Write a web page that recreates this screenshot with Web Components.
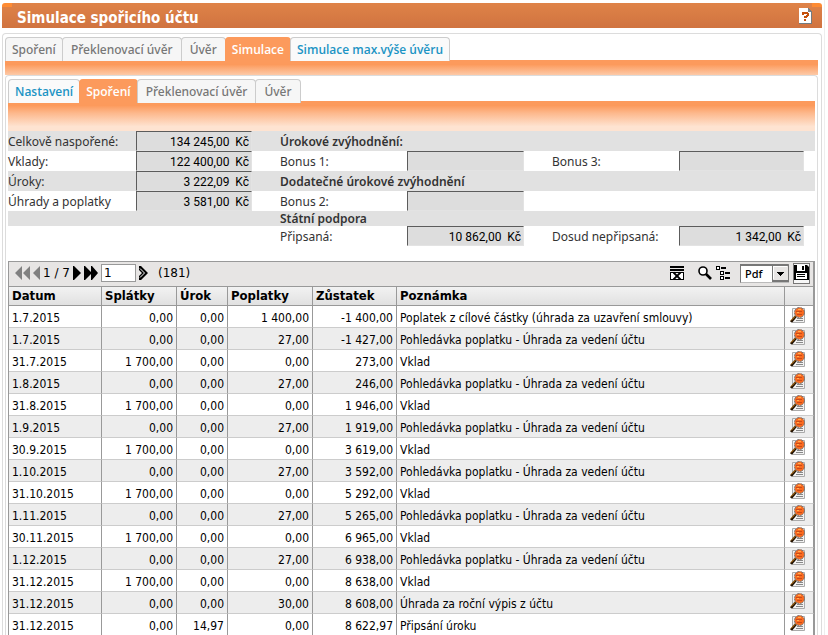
<!DOCTYPE html>
<html lang="cs">
<head>
<meta charset="utf-8">
<title>Simulace spořicího účtu</title>
<style>
html { scrollbar-width: none; background: #fff; }
body { margin: 0; font: 12px/16px "Open Sans", "Noto Sans", sans-serif; color: #333; }
</style>
</head>
<body>
<app-window>
  <title-bar>Simulace spořicího účtu</title-bar>
  <tab-panel>
    <tab-item slot="tabs">Spoření</tab-item>
    <tab-item slot="tabs">Překlenovací úvěr</tab-item>
    <tab-item slot="tabs">Úvěr</tab-item>
    <tab-item slot="tabs" active>Simulace</tab-item>
    <tab-item slot="tabs" linked>Simulace max.výše úvěru</tab-item>
    <tab-panel inner>
      <tab-item slot="tabs" linked>Nastavení</tab-item>
      <tab-item slot="tabs" active>Spoření</tab-item>
      <tab-item slot="tabs">Překlenovací úvěr</tab-item>
      <tab-item slot="tabs">Úvěr</tab-item>
      <savings-summary></savings-summary>
      <grid-toolbar></grid-toolbar>
      <transaction-grid></transaction-grid>
    </tab-panel>
  </tab-panel>
</app-window>
<script>
function define(name, html, setup) {
  const template = document.createElement('template');
  template.innerHTML = html;
  customElements.define(name, class extends HTMLElement {
    constructor() {
      super();
      const root = this.attachShadow({ mode: 'open' });
      root.append(template.content.cloneNode(true));
      if (setup) setup(root);
    }
  });
}

define('app-window', `
<style>
:host { display: block; box-sizing: border-box; min-height: 100vh; margin-right: 3px; padding: 3px 2px 0 2px; border-right: 1px solid #eee; }
</style>
<slot></slot>`);

define('title-bar', `
<style>
:host { display: flex; justify-content: space-between; align-items: center; box-sizing: border-box; height: 25px; padding: 0 10px 0 15px;
  border-radius: 3px 3px 0 0; background:
  linear-gradient(#fe8b33, #fe8b33) left top / 10px 4px no-repeat,
  linear-gradient(#fe8b33, #fe8b33) right top / 10px 4px no-repeat,
  linear-gradient(#df8348, #d07340); }
h1 { margin: 0; padding-top: 4px; font: bold 15px/20px "DejaVu Sans Condensed", "DejaVu Sans", sans-serif; color: #fff; }
button { border: 0; padding: 0; background: none; display: block; }
svg { display: block; }
</style>
<h1><slot></slot></h1>
<button type="button" aria-label="Nápověda"><svg width="13" height="16" viewBox="0 0 13 16" shape-rendering="crispEdges">
<path d="M0 0h9l4 4v12H0z" fill="#747b80"/><path d="M0 0h9v4h3v11H0z" fill="#fff"/><path d="M9 1v3h3z" fill="#7d8386"/>
<path d="M3 4h6v1h1v3H9v1H8v1H5V8h2V7h1V6H5v1H3zM5 11h2v2H5z" fill="#c5500c"/></svg></button>`);

define('tab-panel', `
<style>
:host { display: block; box-sizing: border-box; margin-top: 5px; padding: 3px 3px 0 2px; border: 1px solid #dcdcdc; border-bottom: 0; border-radius: 4px 4px 0 0; background: #fff; }
nav { display: flex; height: 23px; }
.strip { height: 15px; background: linear-gradient(#fc9a5c 30%, #fdcaa8); }
:host([inner]) { margin-top: 0; padding: 3px 2px 0 2px; }
:host([inner]) nav { height: 22px; }
:host([inner]) .strip { height: 30px; background: linear-gradient(#fc9a5c 15%, #fdb88c 40%, #fee3d1 85%, #fee3d1); }
</style>
<nav><slot name="tabs"></slot></nav>
<div class="strip"></div>
<div class="body"><slot></slot></div>`);

define('tab-item', `
<style>
:host { display: block; }
button { box-sizing: border-box; height: 24px; padding: 0 8px; margin-left: -1px; border: 1px solid #ccc; border-bottom: 0; border-radius: 4px 4px 0 0;
  background: #f6f6f6; font: 500 12px/20px "Noto Sans", "Open Sans", sans-serif; color: #777; display: block; white-space: nowrap; }
:host(:first-child) button { margin-left: 0; padding: 0 6px; }
:host([active]) button { background: #fc9a5c; border-color: #fc9a5c; color: #fff; font: 600 12px/20px "Open Sans", "Noto Sans", sans-serif; padding: 0 6px; }
:host([linked]) button { background: #fafafa; color: #1c94c4; font: 600 12px/20px "Open Sans", "Noto Sans", sans-serif; padding: 0 6px; }
</style>
<button type="button" role="tab"><slot></slot></button>`);

define('savings-summary', `
<style>
:host { display: block; }
.row { display: grid; grid-template-columns: minmax(0, 128fr) minmax(0, 116fr) minmax(0, 28fr) minmax(0, 127fr) minmax(0, 117fr) minmax(0, 28fr) minmax(0, 127fr) minmax(0, 125fr) minmax(0, 11fr); min-height: 20px; align-items: center; }
.row:nth-of-type(odd) { background: #e1e1e1; }
.row.short { min-height: 15px; }
label, strong { font: 12px/15px "Noto Sans", "Open Sans", sans-serif; white-space: nowrap; }
strong { font-weight: 600; }
.b { grid-column: 4; } .b + input { grid-column: 5; }
.c { grid-column: 7; } .c + input { grid-column: 8; }
input { box-sizing: border-box; min-width: 0; width: 100%; height: 20px; margin: 0; padding: 1px 2px 0 0; border: 1px solid #e3e3e3; border-top-color: #5c5c5c; border-left-color: #5c5c5c;
  background: #ddd; font: 12px/16px Roboto, "Noto Sans", sans-serif; color: #000; text-align: right; white-space: pre; border-radius: 0; }
</style>
<div class="row"><label for="total">Celkově naspořené:</label><input id="total" readonly value="134 245,00  Kč"><strong class="b">Úrokové zvýhodnění:</strong></div>
<div class="row"><label for="deposits">Vklady:</label><input id="deposits" readonly value="122 400,00  Kč"><label class="b" for="b1">Bonus 1:</label><input id="b1" readonly><label class="c" for="b3">Bonus 3:</label><input id="b3" readonly></div>
<div class="row"><label for="interest">Úroky:</label><input id="interest" readonly value="3 222,09  Kč"><strong class="b">Dodatečné úrokové zvýhodnění</strong></div>
<div class="row"><label for="fees">Úhrady a poplatky</label><input id="fees" readonly value="3 581,00  Kč"><label class="b" for="b2">Bonus 2:</label><input id="b2" readonly></div>
<div class="row short"><strong class="b">Státní podpora</strong></div>
<div class="row"><label class="b" for="credited">Připsaná:</label><input id="credited" readonly value="10 862,00  Kč"><label class="c" for="pending">Dosud nepřipsaná:</label><input id="pending" readonly value="1 342,00  Kč"></div>`);

define('grid-toolbar', `
<style>
:host { display: flex; align-items: center; box-sizing: border-box; height: 26px; margin-top: 15px; padding: 0 3px 2px 6px; border: 1px solid #999; border-right-width: 2px; background: #e7e5e4;
  font: 12px/16px "DejaVu Sans", sans-serif; color: #000; }
button { border: 0; padding: 0; background: none; display: block; color: #000; }
button:disabled { color: #808080; }
svg { display: block; fill: currentColor; }
.pager, .tools { display: flex; align-items: center; gap: 4px; }
.pager { gap: 3px; }
.pager input { box-sizing: border-box; width: 35px; height: 18px; padding: 0 2px; border: 1px solid #999; background: #fff; font: 12px/16px "DejaVu Sans", sans-serif; }
.count { margin-left: 7px; }
.tools { margin-left: auto; }
.search { margin-left: 10px; }
.format { display: grid; margin: 0 0 0 6px; }
select, .format svg { grid-area: 1 / 1; }
select { appearance: none; box-sizing: border-box; width: 49px; height: 19px; padding: 0 0 2px 4px; border: 1px solid #bbb; border-top: 2px solid #777; border-left-color: #777; border-radius: 0; background: #fff; color: #000; font: 500 11px/15px "Noto Sans", sans-serif; }
.format svg { justify-self: end; align-self: center; pointer-events: none; }
</style>
<div class="pager">
<button disabled type="button" aria-label="První"><svg width="15" height="14" viewBox="0 0 15 14"><path d="M7 0v14L0 7zM15 0v14L8 7z"/></svg></button>
<button disabled type="button" aria-label="Předchozí"><svg width="7" height="14" viewBox="0 0 7 14"><path d="M7 0v14L0 7z"/></svg></button>
<span>1 / 7</span>
<button type="button" aria-label="Další"><svg width="8" height="14" viewBox="0 0 8 14"><path d="M0 0h1l7 7-7 7H0z"/></svg></button>
<button type="button" aria-label="Poslední"><svg width="14" height="14" viewBox="0 0 14 14"><path d="M0 0h1l6 6V0h1l6 7-6 7H7V8l-6 6H0z"/></svg></button>
<input aria-label="Stránka" value="1">
<button type="button" aria-label="Přejít"><svg width="9" height="14" viewBox="0 0 9 14"><path d="M0 0h2l7 7-7 7H0v-4l3-3-3-3z"/><path d="M1 2.5 5.5 7 1 11.5" stroke="#fff" fill="none"/></svg></button>
<span class="count">(181)</span>
</div>
<div class="tools">
<button type="button" aria-label="Zrušit filtr"><svg width="14" height="14" viewBox="0 0 14 14"><path d="M0 0h14v2H0zM0 3h14v2H0zM0 6h14v8H0z"/><path d="M1 7h12v6H1z" fill="#fff"/><path d="m3.5 6.5 7 7m0-7-7 7" stroke="#000" stroke-width="1.8"/></svg></button>
<button class="search" type="button" aria-label="Hledat"><svg width="14" height="14" viewBox="0 0 14 14"><circle cx="5" cy="5" r="4" fill="#fff" stroke="#000" stroke-width="1.6"/><path d="m8 8 5 5" stroke="#000" stroke-width="2.6"/></svg></button>
<button type="button" aria-label="Strom"><svg width="14" height="14" viewBox="0 0 14 14" shape-rendering="crispEdges"><path d="M0 0h4v4H0zM4 5h4v4H4zM4 10h4v4H4zM5 1h5v2H5zM9 6h5v2H9zM9 11h5v2H9z"/><path d="M1 1h2v2H1zM5 6h2v2H5zM5 11h2v2H5z" fill="#fff"/></svg></button>
<div class="format"><select aria-label="Formát"><option>Pdf</option></select>
<svg width="17" height="17" viewBox="0 0 17 17" shape-rendering="crispEdges"><path fill="#777" d="M0 0h17v17H0z"/><path fill="#e7e5e4" d="M1 1h15v14H1z"/><path fill="#fff" d="M1 1h14v1H2v12H1z"/><path fill="#000" d="M5 7h7v1h-1v1h-1v1H9v1H8v-1H7V9H6V8H5z"/></svg></div>
<button type="button" aria-label="Uložit"><svg width="17" height="21" viewBox="0 0 17 21"><path d="M.5.5h16v20H.5z" fill="#f7f7f7" stroke="#000" stroke-dasharray="1 1"/><path d="M1 2h13l2 2v13H1z"/><path d="M4 2h8v6H4zM3 10h11v6H3z" fill="#fff"/><path d="M9 3h2v4H9zM4 11h8v1H4zM4 13h8v1H4z"/></svg></button>
</div>`);

const transactions = [
  ['1.7.2015', '0,00', '0,00', '1 400,00', '-1 400,00', 'Poplatek z cílové částky (úhrada za uzavření smlouvy)'],
  ['1.7.2015', '0,00', '0,00', '27,00', '-1 427,00', 'Pohledávka poplatku - Úhrada za vedení účtu'],
  ['31.7.2015', '1 700,00', '0,00', '0,00', '273,00', 'Vklad'],
  ['1.8.2015', '0,00', '0,00', '27,00', '246,00', 'Pohledávka poplatku - Úhrada za vedení účtu'],
  ['31.8.2015', '1 700,00', '0,00', '0,00', '1 946,00', 'Vklad'],
  ['1.9.2015', '0,00', '0,00', '27,00', '1 919,00', 'Pohledávka poplatku - Úhrada za vedení účtu'],
  ['30.9.2015', '1 700,00', '0,00', '0,00', '3 619,00', 'Vklad'],
  ['1.10.2015', '0,00', '0,00', '27,00', '3 592,00', 'Pohledávka poplatku - Úhrada za vedení účtu'],
  ['31.10.2015', '1 700,00', '0,00', '0,00', '5 292,00', 'Vklad'],
  ['1.11.2015', '0,00', '0,00', '27,00', '5 265,00', 'Pohledávka poplatku - Úhrada za vedení účtu'],
  ['30.11.2015', '1 700,00', '0,00', '0,00', '6 965,00', 'Vklad'],
  ['1.12.2015', '0,00', '0,00', '27,00', '6 938,00', 'Pohledávka poplatku - Úhrada za vedení účtu'],
  ['31.12.2015', '1 700,00', '0,00', '0,00', '8 638,00', 'Vklad'],
  ['31.12.2015', '0,00', '0,00', '30,00', '8 608,00', 'Úhrada za roční výpis z účtu'],
  ['31.12.2015', '0,00', '14,97', '0,00', '8 622,97', 'Připsání úroku']
];

define('detail-button', `
<style>
:host { display: block; }
button { display: block; border: 0; padding: 0; background: none; }
svg { display: block; }
</style>
<button type="button" aria-label="Detail"><svg width="15" height="17" viewBox="0 0 15 17">
<path d="M2.5 1.5h12v14h-12z" fill="#f2f2f2" stroke="#aaa"/><path d="M7 11.5h6M6 13.5h7" stroke="#888"/>
<path d="m6 9-5 6" stroke="#221100" stroke-width="2.6"/><path d="m6 8.5-5 5" stroke="#d98a1c"/>
<circle cx="9.5" cy="5.5" r="5" fill="#fa6a20" stroke="#777" stroke-dasharray="3 1"/><path d="M6 4.5h6M7 7.5h5" stroke="#c84c18"/><path d="M8 2.5h3M7 5.5h2" stroke="#ffb050"/></svg></button>`);

define('transaction-grid', `
<style>
:host { display: block; font: 12px/16px "DejaVu Sans Condensed", "DejaVu Sans", sans-serif; color: #000; }
table { width: 100%; table-layout: fixed; border-collapse: separate; border-spacing: 0; border-left: 1px solid #999; border-right: 1px solid #999; }
th, td { box-sizing: border-box; height: 22px; padding: 2px 3px 0; border-right: 1px solid #999; border-bottom: 1px solid #ccc; text-align: right; white-space: nowrap; overflow: hidden; }
th { height: 19px; padding: 0 3px; text-align: left; font-size: 13px; font-weight: bold; background: linear-gradient(#f2f2f2, #e1e1e1); border-bottom: 1px solid #999; }
td:first-child, td:nth-child(6) { text-align: left; }
td:last-child { padding: 0 5px 3px; }
tbody tr:nth-child(even) { background: #ededed; }
.date { width: 93px; } .paid { width: 75px; } .rate { width: 51px; } .fee { width: 85px; } .balance { width: 84px; } .action { width: 29px; }
</style>
<table>
<thead><tr><th class="date">Datum</th><th class="paid">Splátky</th><th class="rate">Úrok</th><th class="fee">Poplatky</th><th class="balance">Zůstatek</th><th>Poznámka</th><th class="action"></th></tr></thead>
<tbody></tbody>
</table>`, root => {
  const body = root.querySelector('tbody');
  for (const record of transactions) {
    const row = body.insertRow();
    for (const value of record) row.insertCell().textContent = value;
    row.insertCell().append(document.createElement('detail-button'));
  }
});
</script>
</body>
</html>
